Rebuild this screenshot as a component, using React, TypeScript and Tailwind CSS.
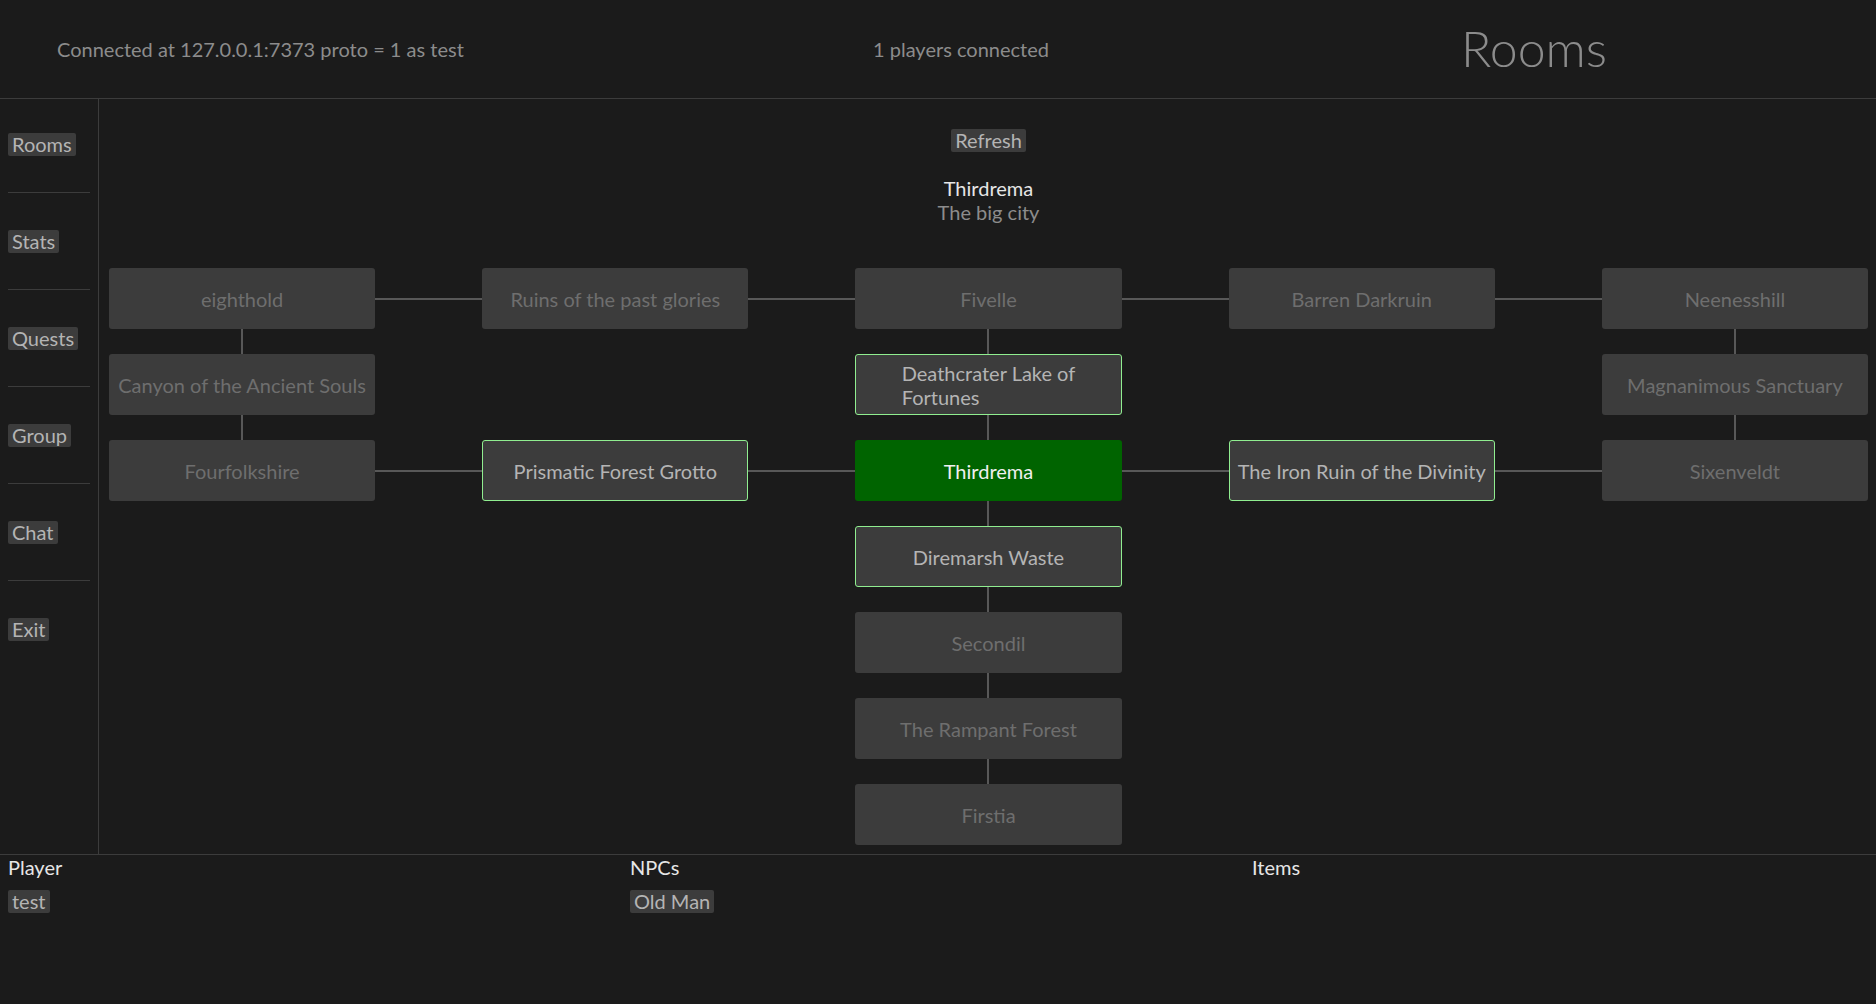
import { Fragment } from 'react';

type Kind = 'dim' | 'near' | 'here';

interface Room {
  name: React.ReactNode;
  kind: Kind;
}

// grid position "row,col" (0-based, node coordinates)
const rooms: Record<string, Room> = {
  '0,0': { name: 'eighthold', kind: 'dim' },
  '0,1': { name: 'Ruins of the past glories', kind: 'dim' },
  '0,2': { name: 'Fivelle', kind: 'dim' },
  '0,3': { name: 'Barren Darkruin', kind: 'dim' },
  '0,4': { name: 'Neenesshill', kind: 'dim' },
  '1,0': { name: 'Canyon of the Ancient Souls', kind: 'dim' },
  '1,2': {
    name: (
      <span className="inline-block text-left leading-[24px]">
        Deathcrater Lake of
        <br />
        Fortunes
      </span>
    ),
    kind: 'near',
  },
  '1,4': { name: 'Magnanimous Sanctuary', kind: 'dim' },
  '2,0': { name: 'Fourfolkshire', kind: 'dim' },
  '2,1': { name: 'Prismatic Forest Grotto', kind: 'near' },
  '2,2': { name: 'Thirdrema', kind: 'here' },
  '2,3': { name: 'The Iron Ruin of the Divinity', kind: 'near' },
  '2,4': { name: 'Sixenveldt', kind: 'dim' },
  '3,2': { name: 'Diremarsh Waste', kind: 'near' },
  '4,2': { name: 'Secondil', kind: 'dim' },
  '5,2': { name: 'The Rampant Forest', kind: 'dim' },
  '6,2': { name: 'Firstia', kind: 'dim' },
};

// horizontal links: "row,col" joins col and col+1
const hLinks = new Set(['0,0', '0,1', '0,2', '0,3', '2,0', '2,1', '2,2', '2,3']);
// vertical links: "row,col" joins row and row+1
const vLinks = new Set(['0,0', '0,2', '0,4', '1,0', '1,2', '1,4', '2,2', '3,2', '4,2', '5,2']);

const ROWS = 7;
const COLS = 5;

const navItems = ['Rooms', 'Stats', 'Quests', 'Group', 'Chat', 'Exit'];

const Chip = ({ children }: { children: React.ReactNode }) => (
  <span className="inline-block h-[23px] rounded-[2px] bg-[#3c3c3c] px-[4px] leading-[23px] text-[#b4b4b4]">
    {children}
  </span>
);

const RoomNode = ({ room }: { room: Room }) => {
  const cls =
    room.kind === 'here'
      ? 'bg-[#006400] text-[#f0f0f0]'
      : room.kind === 'near'
        ? 'bg-[#3c3c3c] text-[#b4b4b4] border-[1.5px] border-[#90ee90]'
        : 'bg-[#3c3c3c] text-[#6e6e6e]';
  return (
    <div
      className={`flex items-center justify-center rounded-[3px] px-[6px] text-center whitespace-nowrap ${cls}`}
    >
      {room.name}
    </div>
  );
};

const RoomGraph = () => {
  const cells: React.ReactNode[] = [];
  for (let gr = 0; gr < ROWS * 2 - 1; gr++) {
    for (let gc = 0; gc < COLS * 2 - 1; gc++) {
      const key = `${gr}-${gc}`;
      const r = Math.floor(gr / 2);
      const c = Math.floor(gc / 2);
      if (gr % 2 === 0 && gc % 2 === 0) {
        const room = rooms[`${r},${c}`];
        cells.push(room ? <RoomNode key={key} room={room} /> : <div key={key} />);
      } else if (gr % 2 === 0) {
        cells.push(
          <div key={key} className="flex items-center">
            {hLinks.has(`${r},${c}`) && <div className="h-[2px] w-full bg-[#585858]" />}
          </div>,
        );
      } else if (gc % 2 === 0) {
        cells.push(
          <div key={key} className="flex justify-center">
            {vLinks.has(`${r},${c}`) && <div className="h-full w-[2px] bg-[#585858]" />}
          </div>,
        );
      } else {
        cells.push(<div key={key} />);
      }
    }
  }
  return (
    <div className="grid grid-cols-[266fr_107fr_266fr_107fr_266fr_107fr_266fr_107fr_266fr] grid-rows-[61px_25px_61px_25px_61px_25px_61px_25px_61px_25px_61px_25px_61px]">
      {cells}
    </div>
  );
};

export default function App() {
  return (
    <div
      className="flex h-[1004px] w-[1876px] flex-col overflow-hidden bg-[#1b1b1b] text-[20px] font-normal text-[#8c8c8c]"
      style={{ fontFamily: 'Lato, "Noto Sans", sans-serif' }}
    >
      <header className="flex h-[99px] shrink-0 items-center border-b border-[#3c3c3c]">
        <div className="w-[780px] pl-[57px]">Connected at 127.0.0.1:7373 proto = 1 as test</div>
        <div className="w-[362px] text-center">1 players connected</div>
        <div className="ml-auto w-[684px] pb-[2px] text-center text-[50px] leading-none font-light">Rooms</div>
      </header>

      <div className="flex h-[755px] shrink-0">
        <nav className="flex w-[99px] shrink-0 flex-col border-r border-[#3c3c3c] px-2">
          {navItems.map((item, i) => (
            <Fragment key={item}>
              <div
                className={`flex pb-[36px] ${i === 0 ? 'pt-[34px]' : 'pt-[37px]'} ${
                  i < navItems.length - 1 ? 'border-b border-[#3c3c3c]' : ''
                }`}
              >
                <Chip>{item}</Chip>
              </div>
            </Fragment>
          ))}
        </nav>

        <main className="flex flex-1 flex-col pl-[10px] pr-[8px]">
          <div className="flex justify-center pt-[30px]">
            <Chip>Refresh</Chip>
          </div>
          <div className="mt-[24px] flex flex-col items-center leading-[24px]">
            <span className="text-[#e6e6e6]">Thirdrema</span>
            <span>The big city</span>
          </div>
          <div className="mt-[44px]">
            <RoomGraph />
          </div>
        </main>
      </div>

      <footer className="grid flex-1 grid-cols-3 gap-[6px] border-t border-[#3c3c3c] px-2">
        <div className="flex flex-col items-start gap-[11px]">
          <span className="leading-[24px] text-[#e6e6e6]">Player</span>
          <Chip>test</Chip>
        </div>
        <div className="flex flex-col items-start gap-[11px]">
          <span className="leading-[24px] text-[#e6e6e6]">NPCs</span>
          <Chip>Old Man</Chip>
        </div>
        <div className="flex flex-col items-start gap-[11px]">
          <span className="leading-[24px] text-[#e6e6e6]">Items</span>
        </div>
      </footer>
    </div>
  );
}
